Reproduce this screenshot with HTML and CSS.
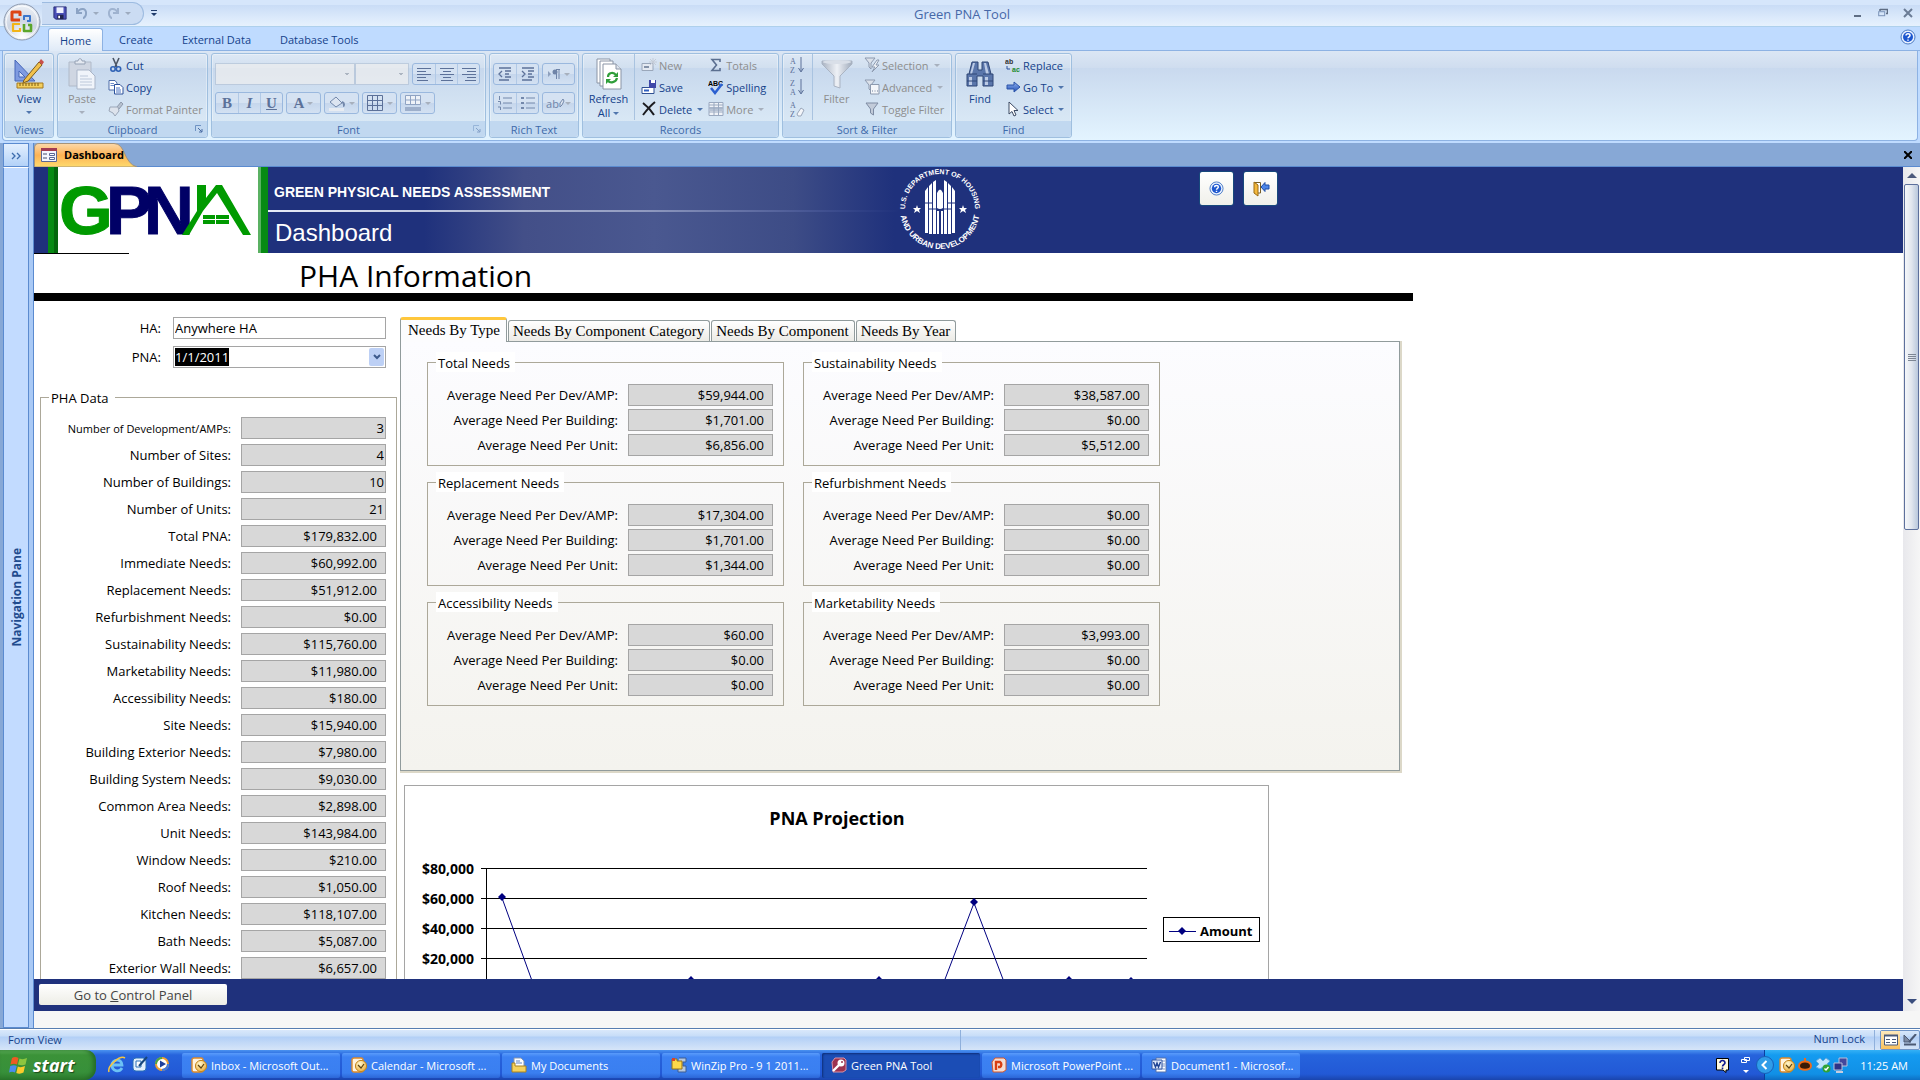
FILE: index.html
```html
<!DOCTYPE html>
<html lang="en">
<head>
    <meta charset="UTF-8">
    <meta name="viewport" content="width=device-width, initial-scale=1.0">
    <title>Green PNA Tool</title>
    <link rel="stylesheet" href="styles.css">
</head>
<body>
    <!-- Shared icons -->
    <svg class="defs" aria-hidden="true">
        <defs>
            <linearGradient id="gBlue" x1="0" y1="0" x2="0" y2="1"><stop offset="0" stop-color="#8fb2f0"/><stop offset="1" stop-color="#2350b5"/></linearGradient>
            <linearGradient id="gGrey" x1="0" y1="0" x2="1" y2="0"><stop offset="0" stop-color="#a9b3c2"/><stop offset=".5" stop-color="#eef1f6"/><stop offset="1" stop-color="#a0abbb"/></linearGradient>
            <radialGradient id="gOrb" cx=".5" cy=".9" r=".9"><stop offset="0" stop-color="#ffffff"/><stop offset=".5" stop-color="#cdd5e2"/><stop offset="1" stop-color="#eef2f8"/></radialGradient>
            <radialGradient id="gGold" cx=".4" cy=".3" r=".8"><stop offset="0" stop-color="#fff7d0"/><stop offset="1" stop-color="#e9a72c"/></radialGradient>
            <symbol id="help" viewBox="0 0 16 16">
                <circle cx="8" cy="8" r="7" fill="#e8f1ff" stroke="#4d7cc4"/>
                <circle cx="8" cy="8" r="5" fill="#1d57cf"/>
                <path d="M6 6.6C6 4.2 10 4.3 10 6.5C10 7.9 8 7.8 8 9.3M8 10.4V11.8" fill="none" stroke="#fff" stroke-width="1.5"/>
            </symbol>
            <symbol id="disk" viewBox="0 0 16 16">
                <path d="M1 1H15V15H3L1 13Z" fill="#4a4fb8" stroke="#23276e"/>
                <path d="M4 1.5H12V8H4Z" fill="#eef0ff"/>
                <path d="M5 10H12V15H5Z" fill="#20244f"/><path d="M6 11H8V14H6Z" fill="#fff"/>
            </symbol>
            <symbol id="funnel" viewBox="0 0 32 32">
                <path d="M1 3H31V6L19 18V30L13 28V18L1 6Z" fill="url(#gGrey)" stroke="#aab4c3"/>
                <ellipse cx="16" cy="4" rx="14" ry="2" fill="#d9dfe8"/>
            </symbol>
            <symbol id="outlook" viewBox="0 0 16 16">
                <rect x="1" y="1" width="11" height="14" rx="2" fill="#fff3df" stroke="#dd8a2b" stroke-width="1.4"/>
                <circle cx="10" cy="9" r="5.6" fill="url(#gGold)" stroke="#c4851d"/>
                <path d="M7 8L10 11L13 7" fill="none" stroke="#5d4310" stroke-width="1.2"/>
            </symbol>
            <symbol id="launcher" viewBox="0 0 8 8">
                <path d="M.5 6V.5H6" fill="none" stroke="#6f93c4"/><path d="M3 3L7 7M7 4V7H4" fill="none" stroke="#4a6da3"/>
            </symbol>
        </defs>
    </svg>

    <header class="titlebar">
        <div class="quick-access">
            <button type="button" aria-label="Save"><svg width="14" height="14"><use href="#disk"/></svg></button>
            <button type="button" class="off" aria-label="Undo"><svg width="24" height="14" viewBox="0 0 24 14"><path d="M2 2V7H7M2 7C5 1 12 2 11 8C11 10 9 12 8 12" fill="none" stroke="#8ca3c4" stroke-width="2"/><path d="M18 6H24L21 9Z" fill="#9dabbf"/></svg></button>
            <button type="button" class="off" aria-label="Redo"><svg width="24" height="14" viewBox="0 0 24 14"><path d="M11 2V7H6M11 7C8 1 1 2 2 8C2 10 4 12 5 12" fill="none" stroke="#9fb3d0" stroke-width="2"/><path d="M18 6H24L21 9Z" fill="#9dabbf"/></svg></button>
        </div>
        <button type="button" class="customize" aria-label="Customize toolbar"><svg width="6" height="7" viewBox="0 0 6 7"><path d="M0 0H6V1H0ZM0 3H6L3 6Z" fill="#1f3b6b"/></svg></button>
        <span class="app-title">Green PNA Tool</span>
        <div class="window-buttons">
            <button type="button" aria-label="Minimize"><svg width="10" height="10" viewBox="0 0 10 10"><path d="M1 8H8" stroke="#5e6d84" stroke-width="2"/></svg></button>
            <button type="button" aria-label="Restore"><svg width="10" height="10" viewBox="0 0 10 10"><path d="M2 1.5H9.5V5.5H8M2 1V3" fill="none" stroke="#5e6d84" stroke-width="1.5"/><rect x=".7" y="3.7" width="6" height="4" fill="none" stroke="#7b93b8"/></svg></button>
            <button type="button" aria-label="Close"><svg width="10" height="10" viewBox="0 0 10 10"><path d="M1 1L9 9M9 1L1 9" stroke="#6b7c96" stroke-width="2"/></svg></button>
        </div>
    </header>
    <button type="button" class="orb" aria-label="Office Button">
        <svg width="38" height="38" viewBox="0 0 38 38">
            <circle cx="19" cy="19" r="18" fill="url(#gOrb)" stroke="#8b98ad"/>
            <circle cx="19" cy="19" r="16" fill="none" stroke="#fff" opacity=".8"/>
            <g fill="none" stroke-width="3" stroke-linejoin="round">
                <path d="M17 17H9V9H17V13" stroke="#dd4413"/>
                <path d="M21 17V13H27V18H24" stroke="#3a76cc" stroke-width="2"/>
                <path d="M17 21H10V28H17V25" stroke="#f2b418" stroke-width="2.2"/>
                <path d="M21 21V28H28V22H25" stroke="#5ba62a" stroke-width="2.6"/>
            </g>
        </svg>
    </button>

    <nav class="ribbon-tabs">
        <a href="#home" class="current">Home</a>
        <a href="#create">Create</a>
        <a href="#external">External Data</a>
        <a href="#tools">Database Tools</a>
        <button type="button" class="help" aria-label="Help"><svg width="16" height="16"><use href="#help"/></svg></button>
    </nav>

    <div class="ribbon">
        <section class="group g-views">
            <div class="tools">
                <button type="button" class="big">
                    <svg width="30" height="32" viewBox="0 0 30 32">
                        <path d="M1 2L21 23H1Z" fill="#7f9be0" stroke="#4766b8"/><path d="M5 13L11 19H5Z" fill="#d5e0f8" stroke="#4766b8"/>
                        <path d="M10 22L25 4L28 7L14 23L9 25Z" fill="#f2c14c" stroke="#7a5c1c"/><path d="M25 4L27 1L30 4L28 7Z" fill="#c9504a"/>
                        <path d="M3 25H29V30H3Z" fill="#f3cf5d" stroke="#a6791c"/><path d="M6 25V28M9 25V28M12 25V28M15 25V28M18 25V28M21 25V28M24 25V28" stroke="#7b5a12"/>
                    </svg>
                    View<i class="caret"></i>
                </button>
            </div>
            <h2>Views</h2>
        </section>
        <section class="group g-clip">
            <div class="tools">
                <button type="button" class="big off">
                    <svg width="28" height="32" viewBox="0 0 28 32">
                        <path d="M1 4H23V28H1Z" fill="#cfd6e2" stroke="#b0bac9"/><path d="M7 6V3H10C10 0 14 0 14 3H17V6Z" fill="#e4e9f1" stroke="#95a1b4"/>
                        <path d="M9 12H21L27 18V31H9Z" fill="#f0f4fa" stroke="#a9b5c8"/><path d="M12 18H20M12 21H24M12 24H24M12 27H24" stroke="#bcc8da"/>
                    </svg>
                    Paste<i class="caret"></i>
                </button>
                <div class="stack">
                    <button type="button"><svg width="16" height="16" viewBox="0 0 16 16"><path d="M5 1L9 10M11 1L7 10" stroke="#4b5564" stroke-width="1.6"/><circle cx="5" cy="12" r="2.2" fill="none" stroke="#2f62b5" stroke-width="1.6"/><circle cx="10.5" cy="12" r="2.2" fill="none" stroke="#2f62b5" stroke-width="1.6"/></svg>Cut</button>
                    <button type="button"><svg width="16" height="16" viewBox="0 0 16 16"><path d="M1 1.5H7L9 4V11H1Z" fill="#fff" stroke="#4a6ba8"/><path d="M2.5 4.5H6M2.5 6.5H6" stroke="#6c8cc8"/><path d="M6.5 5.5H12L15 8.5V15H6.5Z" fill="#fff" stroke="#2c519b"/><path d="M8 9H12M8 11H13M8 13H13" stroke="#4a74c4"/></svg>Copy</button>
                    <button type="button" class="off"><svg width="16" height="16" viewBox="0 0 16 16"><path d="M9 6L13 1L15 3L11 8Z" fill="#b7c1cf" stroke="#8e9aad"/><path d="M2 6L10 6L11 10L7 15L5 12L1 10Z" fill="#dde3ec" stroke="#9ba7b8"/></svg>Format Painter</button>
                </div>
            </div>
            <h2>Clipboard<svg class="corner" width="8" height="8"><use href="#launcher"/></svg></h2>
        </section>
        <section class="group g-font">
            <div class="tools rows">
                <div class="line">
                    <div class="combos">
                        <select class="font-name" aria-label="Font" disabled></select>
                        <select class="font-size" aria-label="Font size" disabled></select>
                    </div>
                    <div class="cluster">
                        <button type="button" aria-label="Align left"><svg width="16" height="14" viewBox="0 0 16 14"><path d="M1 1.5H15M1 4.5H10M1 7.5H15M1 10.5H10M1 13.5H12" stroke="#5c7199"/></svg></button>
                        <button type="button" aria-label="Center"><svg width="16" height="14" viewBox="0 0 16 14"><path d="M1 1.5H15M4 4.5H12M1 7.5H15M4 10.5H12M2 13.5H14" stroke="#5c7199"/></svg></button>
                        <button type="button" aria-label="Align right"><svg width="16" height="14" viewBox="0 0 16 14"><path d="M1 1.5H15M6 4.5H15M1 7.5H15M6 10.5H15M4 13.5H15" stroke="#5c7199"/></svg></button>
                    </div>
                </div>
                <div class="line">
                    <div class="cluster">
                        <button type="button" class="glyph"><b>B</b></button>
                        <button type="button" class="glyph"><b><i>I</i></b></button>
                        <button type="button" class="glyph"><b><u>U</u></b></button>
                    </div>
                    <div class="cluster"><button type="button" class="glyph wide"><b>A</b><i class="caret"></i></button></div>
                    <div class="cluster"><button type="button" class="wide" aria-label="Fill color"><svg width="18" height="16" viewBox="0 0 18 16"><path d="M2 7L8 2L14 8L8 12Z" fill="#dde5f1" stroke="#7388ab"/><path d="M14 7C17 8 16 11 15 11" fill="none" stroke="#7388ab" stroke-width="2"/><path d="M1 13H16V16H1Z" fill="#e8ecf2"/></svg><i class="caret"></i></button></div>
                    <div class="cluster"><button type="button" class="wide" aria-label="Gridlines"><svg width="18" height="18" viewBox="0 0 18 18"><path d="M1.5 1.5H16.5V16.5H1.5ZM1.5 6.5H16.5M1.5 11.5H16.5M6.5 1.5V16.5M11.5 1.5V16.5" fill="none" stroke="#5c7199"/></svg><i class="caret"></i></button></div>
                    <div class="cluster"><button type="button" class="wide" aria-label="Alternate fill"><svg width="18" height="18" viewBox="0 0 18 18"><path d="M1.5 1.5H16.5V10.5H1.5ZM1.5 6H16.5M6.5 1.5V10M11.5 1.5V10" fill="#eef2f8" stroke="#8fa3c3"/><path d="M1 13H17V17H1Z" fill="#9dafcb"/></svg><i class="caret"></i></button></div>
                </div>
            </div>
            <h2>Font<svg class="corner off" width="8" height="8"><use href="#launcher"/></svg></h2>
        </section>
        <section class="group g-rich">
            <div class="tools rows">
                <div class="line">
                    <div class="cluster">
                        <button type="button" aria-label="Decrease indent"><svg width="16" height="16" viewBox="0 0 16 16"><path d="M2 2H14M8 5H14M8 8H12M8 11H14M2 14H12M5 5L2 8L5 11" fill="none" stroke="#5c7199" stroke-width="1.3"/></svg></button>
                        <button type="button" aria-label="Increase indent"><svg width="16" height="16" viewBox="0 0 16 16"><path d="M2 2H14M8 5H14M8 8H12M8 11H14M2 14H12M2 5L5 8L2 11" fill="none" stroke="#5c7199" stroke-width="1.3"/></svg></button>
                    </div>
                    <div class="cluster"><button type="button" class="wide" aria-label="Text direction"><svg width="14" height="12" viewBox="0 0 14 12"><path d="M1 3L4 6L1 9Z" fill="#8ea0bd"/><path d="M9 1.5H13M9.5 1V11M12 1V11" stroke="#6f84a8"/><circle cx="8" cy="4" r="2.5" fill="#6f84a8"/></svg><i class="caret"></i></button></div>
                </div>
                <div class="line">
                    <div class="cluster">
                        <button type="button" aria-label="Numbering"><svg width="16" height="16" viewBox="0 0 16 16"><path d="M6 3H15M6 8H15M6 13H15M2.5 1V5M1 6.5H3.5V9.5M1 12H3.5V15" fill="none" stroke="#7388ab"/></svg></button>
                        <button type="button" aria-label="Bullets"><svg width="16" height="16" viewBox="0 0 16 16"><path d="M6 3H15M6 8H15M6 13H15" stroke="#7388ab"/><path d="M1 2H4V4H1ZM1 7H4V9H1ZM1 12H4V14H1Z" fill="#7388ab"/></svg></button>
                    </div>
                    <div class="cluster"><button type="button" class="marker wide">ab<svg width="6" height="10" viewBox="0 0 6 10"><path d="M1 9L1 5L4 1L5 3L3 7Z" fill="#dfe6f1" stroke="#7388ab"/></svg><i class="caret"></i></button></div>
                </div>
            </div>
            <h2>Rich Text</h2>
        </section>
        <section class="group g-records">
            <div class="tools">
                <button type="button" class="big">
                    <svg width="26" height="32" viewBox="0 0 26 32">
                        <path d="M1 1H14V25H1Z" fill="#fff" stroke="#8a94a5"/><path d="M4 3H17V28H4Z" fill="#fff" stroke="#8a94a5"/>
                        <path d="M7 6H20L25 11V31H7Z" fill="#fff" stroke="#8a94a5"/><path d="M20 6V11H25" fill="#dfe5ee" stroke="#8a94a5"/>
                        <path d="M12 19C12 14 18 14 20 17M21 20C20 25 14 25 12 23" fill="none" stroke="#2f9e3a" stroke-width="2.2"/><path d="M22 14V19H17ZM10 26V21H15Z" fill="#2f9e3a"/>
                    </svg>
                    <span>Refresh<br>All<i class="caret inline"></i></span>
                </button>
                <div class="stack ruled">
                    <button type="button" class="off"><svg width="16" height="16" viewBox="0 0 16 16"><path d="M1 6.5H12V13.5H1Z" fill="#e4e9f1" stroke="#9aa7ba"/><path d="M3 10H8" stroke="#8492a8" stroke-width="2"/><path d="M12 1V9M8 5H16M9 2L15 8M15 2L9 8" stroke="#c5ccd7"/></svg>New</button>
                    <button type="button"><svg width="16" height="16" viewBox="0 0 16 16"><path d="M1 8.5H13V14.5H1Z" fill="#fff" stroke="#2e4f92"/><path d="M3 11.5H8" stroke="#2f5fc0" stroke-width="2"/><path d="M8 1H15V9H8Z" fill="#4048a8"/><path d="M10 1H14V4H10Z" fill="#fff"/></svg>Save</button>
                    <button type="button"><svg width="16" height="16" viewBox="0 0 16 16"><path d="M2 2C6 5 10 9 13 14M14 1C9 5 5 10 2 14" fill="none" stroke="#1b1b1f" stroke-width="2"/></svg>Delete<i class="caret"></i></button>
                </div>
                <div class="stack second">
                    <button type="button" class="off"><svg width="16" height="16" viewBox="0 0 16 16"><path d="M12 5V2.5H4L8.5 8L4 13.5H12V11" fill="none" stroke="#5b6f90" stroke-width="1.6"/></svg>Totals</button>
                    <button type="button"><svg width="16" height="16" viewBox="0 0 16 16"><text x="0" y="7" class="abc">ABC</text><path d="M3 9L7 14L14 5" fill="none" stroke="#2b5fd0" stroke-width="2.5"/></svg>Spelling</button>
                    <button type="button" class="off"><svg width="16" height="16" viewBox="0 0 16 16"><path d="M1 1.5H15V14.5H1Z" fill="#f0f3f8" stroke="#9aa9c0"/><path d="M1 6H15V10H1Z" fill="#b6c2d4"/><path d="M1 4H15M1 7H15M1 11H15M6 1V15M10.5 1V15" stroke="#9aa9c0"/></svg>More<i class="caret"></i></button>
                </div>
            </div>
            <h2>Records</h2>
        </section>
        <section class="group g-sort">
            <div class="tools">
                <div class="stack icons">
                    <button type="button" aria-label="Ascending"><svg width="16" height="20" viewBox="0 0 16 20"><text x="1" y="9" class="az">A</text><text x="1" y="18" class="az">Z</text><path d="M12 2V16M9.5 13L12 17L14.5 13" fill="none" stroke="#5c7199"/></svg></button>
                    <button type="button" aria-label="Descending"><svg width="16" height="20" viewBox="0 0 16 20"><text x="1" y="9" class="az">Z</text><text x="1" y="18" class="az">A</text><path d="M12 2V16M9.5 13L12 17L14.5 13" fill="none" stroke="#5c7199"/></svg></button>
                    <button type="button" aria-label="Clear sorts"><svg width="16" height="20" viewBox="0 0 16 20"><text x="1" y="9" class="az">A</text><text x="1" y="18" class="az">Z</text><path d="M8 15L12 9L15 11L12 17H9Z" fill="#f3f5f9" stroke="#9aa7ba"/></svg></button>
                </div>
                <button type="button" class="big off ruled">
                    <svg width="32" height="32"><use href="#funnel"/></svg>
                    Filter
                </button>
                <div class="stack">
                    <button type="button" class="off"><svg width="16" height="16" viewBox="0 0 16 16"><path d="M1 1H11L7 6V12L5 10V6Z" fill="#dbe1ea" stroke="#8d9aaf"/><path d="M13 3L8 10H11L8 15L15 8H12L15 3Z" fill="#eef1f6" stroke="#8d9aaf"/></svg>Selection<i class="caret"></i></button>
                    <button type="button" class="off"><svg width="16" height="16" viewBox="0 0 16 16"><path d="M1 1H11L7 6V12L5 10V6Z" fill="#dbe1ea" stroke="#8d9aaf"/><path d="M6.5 5.5H15V15H6.5Z" fill="#f4f6fa" stroke="#8d9aaf"/><path d="M8 12H9M10.5 12H11.5M13 12H14" stroke="#6f7f98"/></svg>Advanced<i class="caret"></i></button>
                    <button type="button" class="off"><svg width="16" height="16" viewBox="0 0 16 16"><path d="M2 2H14L9.5 8V14L6.5 12V8Z" fill="#c2cbd9" stroke="#7e8ca3"/></svg>Toggle Filter</button>
                </div>
            </div>
            <h2>Sort &amp; Filter</h2>
        </section>
        <section class="group g-find">
            <div class="tools">
                <button type="button" class="big">
                    <svg width="28" height="32" viewBox="0 0 28 32">
                        <path d="M6 4H12V12H16V4H22L25 16H27V28H17V18H11V28H1V16H3Z" fill="#5a76ab" stroke="#2f4676"/>
                        <path d="M7 5H9L6 16H4ZM18 5H20L23 16H20ZM3 19H6V27H3ZM19 19H22V27H19Z" fill="#bccbe6"/><path d="M1 23H11M17 23H27M3 16H11M17 16H25" stroke="#2f4676"/>
                    </svg>
                    Find
                </button>
                <div class="stack">
                    <button type="button"><svg width="16" height="18" viewBox="0 0 16 18"><text x="0" y="8" class="ab">ab</text><text x="7" y="16" class="ac">ac</text><path d="M2 10V13H5" fill="none" stroke="#2c519b"/></svg>Replace</button>
                    <button type="button"><svg width="16" height="16" viewBox="0 0 16 16"><path d="M2 6H9V3L15 8L9 13V10H2Z" fill="url(#gBlue)" stroke="#2a52a8"/></svg>Go To<i class="caret"></i></button>
                    <button type="button"><svg width="16" height="16" viewBox="0 0 16 16"><path d="M4 1V13L7 10.5L9 15L11 14L9 9.5H13Z" fill="#fff" stroke="#3c4a63"/></svg>Select<i class="caret"></i></button>
                </div>
            </div>
            <h2>Find</h2>
        </section>
    </div>

    <div class="workspace">
        <aside class="nav-pane">
            <button type="button" class="expand" aria-label="Open navigation pane"><svg width="10" height="8" viewBox="0 0 10 8"><path d="M1 1L4 4L1 7M6 1L9 4L6 7" fill="none" stroke="#3d6cad" stroke-width="1.3"/></svg></button>
            <div class="nav-title"><span>Navigation Pane</span></div>
        </aside>
        <div class="document">
            <div class="doc-tabs">
                <svg class="doc-shape" width="104" height="24" viewBox="0 0 104 24">
                    <defs><linearGradient id="gTab" x1="0" y1="0" x2="0" y2="1"><stop offset="0" stop-color="#fbd9ab"/><stop offset=".5" stop-color="#fdb254"/><stop offset="1" stop-color="#fedb6e"/></linearGradient></defs>
                    <path d="M.5 24V5Q.5 .5 5 .5H80C92 .5 89 20 103 24Z" fill="url(#gTab)" stroke="#a5937a"/>
                </svg>
                <a href="#dashboard" class="doc-tab">
                    <svg width="16" height="14" viewBox="0 0 16 14"><path d="M.5 .5H15.5V13.5H.5Z" fill="#f4f6ff" stroke="#5a6795"/><path d="M0 0H16V3H0Z" fill="#a33b52"/><path d="M2 6H6M2 10H6" stroke="#444c6e"/><path d="M8.5 5.5H13.5V7.5H8.5ZM8.5 9.5H13.5V11.5H8.5Z" fill="#fff" stroke="#5a6795"/></svg>
                    Dashboard
                </a>
                <button type="button" class="doc-close" aria-label="Close form"><svg width="8" height="8" viewBox="0 0 8 8"><path d="M0 0L8 8M8 0L0 8" stroke="#000" stroke-width="2"/></svg></button>
            </div>
            <div class="form-area">
                <main class="form">
                    <div class="banner">
                        <svg class="logo" width="220" height="86" viewBox="0 0 220 86" role="img" aria-label="GPNA">
                            <path d="M0 0H220V86H0Z" fill="#fff"/>
                            <path d="M0 0H10V86H0ZM210 0H220V86H210Z" fill="#078a14"/><path d="M6 0H10V86H6Z" fill="#04660d"/><path d="M210 0H213V86H210Z" fill="#5bb163"/>
                            <text y="67" class="logo-text"><tspan x="11" class="logo-g">G</tspan><tspan x="58">P</tspan><tspan x="96">N</tspan></text>
                            <path d="M134 68L149 44V18H158V31L168 18H174L203 68H195L169 26L155 44L141 68Z" fill="#009a00"/>
                            <path d="M155 48H167V52H155ZM168 48H181V52H168ZM155 53H167V57H155ZM168 53H181V57H168Z" fill="#009a00"/>
                        </svg>
                        <div class="banner-text">
                            <p>GREEN PHYSICAL NEEDS ASSESSMENT</p>
                            <p class="page-name">Dashboard</p>
                        </div>
                        <svg class="seal" width="84" height="86" viewBox="0 0 84 86" role="img" aria-label="U.S. Department of Housing and Urban Development">
                            <defs>
                                <path id="ringTop" d="M7 42A35 35 0 0 1 77 42"/>
                                <path id="ringBottom" d="M2 42A40 40 0 0 0 82 42"/>
                            </defs>
                            <text class="ring"><textPath href="#ringTop" startOffset="50%">U.S. DEPARTMENT OF HOUSING</textPath></text>
                            <text class="ring lower"><textPath href="#ringBottom" startOffset="50%">AND URBAN DEVELOPMENT</textPath></text>
                            <path d="M27 24L30 20V66H27ZM31 19L34 16V67H31ZM35 15L38 13V67H35ZM46 13L49 15V67H46ZM50 16L53 19V67H50ZM54 20L57 24V66H54ZM39 44H41V67H39ZM43 44H45V67H43Z" fill="#fff"/>
                            <path d="M39 41V26Q42 19 45 26V41Q42 43 39 41Z" fill="#fff"/>
                            <path d="M27 36H34M50 36H57M31 42H38M46 42H53" stroke="#1f317c"/>
                            <path d="M19 38L20 41H23L21 43L22 46L19 44L16 46L17 43L15 41H18ZM65 38L66 41H69L67 43L68 46L65 44L62 46L63 43L61 41H64Z" fill="#fff"/>
                        </svg>
                        <div class="banner-buttons">
                            <button type="button" aria-label="Help"><svg width="15" height="15"><use href="#help"/></svg></button>
                            <button type="button" aria-label="Exit"><svg width="18" height="16" viewBox="0 0 18 16"><path d="M3 1.5H8.5V12H3Z" fill="#fff" stroke="#77602a"/><path d="M2 1L6 4V15L2 12Z" fill="#f3b83c" stroke="#9a6a12"/><path d="M17 4V8H13V10.5L9 6L13 1.5V4Z" fill="#4d86e8" stroke="#1f4ea8"/></svg></button>
                        </div>
                    </div>
                    <h1>PHA Information</h1>
                    <div class="rule"></div>

                    <div class="form-body">
                        <div class="left-column">
                            <label class="pick"><span>HA:</span><input type="text" value="Anywhere HA"></label>
                            <label class="pick" for="pna"><span>PNA:</span>
                                <span class="combo"><select id="pna"><option>1/1/2011</option></select><mark aria-hidden="true">1/1/2011</mark><i class="drop"><svg width="8" height="6" viewBox="0 0 8 6"><path d="M1 1L4 4L7 1" fill="none" stroke="#3d5a8c" stroke-width="2"/></svg></i></span>
                            </label>
                            <fieldset class="pha-data">
                                <legend>PHA Data</legend>
                                <label class="field small"><span>Number of Development/AMPs:</span><input type="text" class="count" value="3" readonly></label>
                                <label class="field"><span>Number of Sites:</span><input type="text" class="count" value="4" readonly></label>
                                <label class="field"><span>Number of Buildings:</span><input type="text" class="count" value="10" readonly></label>
                                <label class="field"><span>Number of Units:</span><input type="text" class="count" value="21" readonly></label>
                                <label class="field"><span>Total PNA:</span><input type="text" value="$179,832.00" readonly></label>
                                <label class="field"><span>Immediate Needs:</span><input type="text" value="$60,992.00" readonly></label>
                                <label class="field"><span>Replacement Needs:</span><input type="text" value="$51,912.00" readonly></label>
                                <label class="field"><span>Refurbishment Needs:</span><input type="text" value="$0.00" readonly></label>
                                <label class="field"><span>Sustainability Needs:</span><input type="text" value="$115,760.00" readonly></label>
                                <label class="field"><span>Marketability Needs:</span><input type="text" value="$11,980.00" readonly></label>
                                <label class="field"><span>Accessibility Needs:</span><input type="text" value="$180.00" readonly></label>
                                <label class="field"><span>Site Needs:</span><input type="text" value="$15,940.00" readonly></label>
                                <label class="field"><span>Building Exterior Needs:</span><input type="text" value="$7,980.00" readonly></label>
                                <label class="field"><span>Building System Needs:</span><input type="text" value="$9,030.00" readonly></label>
                                <label class="field"><span>Common Area Needs:</span><input type="text" value="$2,898.00" readonly></label>
                                <label class="field"><span>Unit Needs:</span><input type="text" value="$143,984.00" readonly></label>
                                <label class="field"><span>Window Needs:</span><input type="text" value="$210.00" readonly></label>
                                <label class="field"><span>Roof Needs:</span><input type="text" value="$1,050.00" readonly></label>
                                <label class="field"><span>Kitchen Needs:</span><input type="text" value="$118,107.00" readonly></label>
                                <label class="field"><span>Bath Needs:</span><input type="text" value="$5,087.00" readonly></label>
                                <label class="field"><span>Exterior Wall Needs:</span><input type="text" value="$6,657.00" readonly></label>
                            </fieldset>
                        </div>

                        <div class="right-column">
                            <div class="tabs" role="tablist">
                                <button type="button" role="tab" aria-selected="true" class="tab active">Needs By Type</button>
                                <button type="button" role="tab" class="tab">Needs By Component Category</button>
                                <button type="button" role="tab" class="tab">Needs By Component</button>
                                <button type="button" role="tab" class="tab">Needs By Year</button>
                            </div>
                            <div class="tab-panel" role="tabpanel">
                                <fieldset>
                                    <legend>Total Needs</legend>
                                    <label class="field"><span>Average Need Per Dev/AMP:</span><input type="text" value="$59,944.00" readonly></label>
                                    <label class="field"><span>Average Need Per Building:</span><input type="text" value="$1,701.00" readonly></label>
                                    <label class="field"><span>Average Need Per Unit:</span><input type="text" value="$6,856.00" readonly></label>
                                </fieldset>
                                <fieldset>
                                    <legend>Sustainability Needs</legend>
                                    <label class="field"><span>Average Need Per Dev/AMP:</span><input type="text" value="$38,587.00" readonly></label>
                                    <label class="field"><span>Average Need Per Building:</span><input type="text" value="$0.00" readonly></label>
                                    <label class="field"><span>Average Need Per Unit:</span><input type="text" value="$5,512.00" readonly></label>
                                </fieldset>
                                <fieldset>
                                    <legend>Replacement Needs</legend>
                                    <label class="field"><span>Average Need Per Dev/AMP:</span><input type="text" value="$17,304.00" readonly></label>
                                    <label class="field"><span>Average Need Per Building:</span><input type="text" value="$1,701.00" readonly></label>
                                    <label class="field"><span>Average Need Per Unit:</span><input type="text" value="$1,344.00" readonly></label>
                                </fieldset>
                                <fieldset>
                                    <legend>Refurbishment Needs</legend>
                                    <label class="field"><span>Average Need Per Dev/AMP:</span><input type="text" value="$0.00" readonly></label>
                                    <label class="field"><span>Average Need Per Building:</span><input type="text" value="$0.00" readonly></label>
                                    <label class="field"><span>Average Need Per Unit:</span><input type="text" value="$0.00" readonly></label>
                                </fieldset>
                                <fieldset>
                                    <legend>Accessibility Needs</legend>
                                    <label class="field"><span>Average Need Per Dev/AMP:</span><input type="text" value="$60.00" readonly></label>
                                    <label class="field"><span>Average Need Per Building:</span><input type="text" value="$0.00" readonly></label>
                                    <label class="field"><span>Average Need Per Unit:</span><input type="text" value="$0.00" readonly></label>
                                </fieldset>
                                <fieldset>
                                    <legend>Marketability Needs</legend>
                                    <label class="field"><span>Average Need Per Dev/AMP:</span><input type="text" value="$3,993.00" readonly></label>
                                    <label class="field"><span>Average Need Per Building:</span><input type="text" value="$0.00" readonly></label>
                                    <label class="field"><span>Average Need Per Unit:</span><input type="text" value="$0.00" readonly></label>
                                </fieldset>
                            </div>
                            <div class="chart">
                                <svg width="863" height="300" viewBox="0 0 863 300">
                                    <text x="432" y="39" class="chart-title">PNA Projection</text>
                                    <g class="axis-labels">
                                        <text x="69" y="88">$80,000</text>
                                        <text x="69" y="118">$60,000</text>
                                        <text x="69" y="148">$40,000</text>
                                        <text x="69" y="178">$20,000</text>
                                    </g>
                                    <path d="M76 82.5H742M76 112.5H742M76 142.5H742M76 172.5H742M81.5 82V210" stroke="#000" fill="none"/>
                                    <path d="M97 112L134 214L159 220M534 209L569 117L604 209" stroke="#000080" fill="none"/>
                                    <path d="M97 107L101 111L97 115L93 111ZM569 112L573 116L569 120L565 116ZM286 190L290 194L286 198L282 194ZM474 190L478 194L474 198L470 194ZM664 190L668 194L664 198L660 194ZM726 191L730 195L726 199L722 195Z" fill="#000080"/>
                                    <rect x="758.5" y="131.5" width="96" height="24" fill="#fff" stroke="#000"/>
                                    <path d="M764 145.5H791" stroke="#000080"/><path d="M777 141L781 145L777 149L773 145Z" fill="#000080"/>
                                    <text x="795" y="150" class="legend-text">Amount</text>
                                </svg>
                            </div>
                        </div>
                    </div>

                    <div class="form-footer">
                        <button type="button">Go to <u>C</u>ontrol Panel</button>
                    </div>
                </main>
                <div class="scrollbar">
                    <svg width="10" height="6" viewBox="0 0 10 6"><path d="M5 0L10 5H0Z" fill="#4d5b7d"/></svg>
                    <div class="track"><div class="thumb"><i></i><i></i><i></i><i></i></div></div>
                    <svg width="10" height="6" viewBox="0 0 10 6"><path d="M0 0H10L5 5Z" fill="#3a4d7d"/></svg>
                </div>
            </div>
            <div class="below-form"></div>
        </div>
    </div>

    <footer class="status">
        <span class="mode">Form View</span>
        <span class="locks">Num Lock</span>
        <div class="views">
            <button type="button" class="on" aria-label="Form View"><svg width="14" height="12" viewBox="0 0 14 12"><path d="M.5 1.5H13.5V11H.5Z" fill="#fff" stroke="#49597a"/><path d="M0 1.5H14" stroke="#49597a" stroke-width="2"/><path d="M2 5.5H6M2 8.5H6M8 5.5H12M8 8.5H12" stroke="#49597a"/></svg></button>
            <button type="button" aria-label="Design View"><svg width="14" height="12" viewBox="0 0 14 12"><path d="M1 1L8 8H1Z" fill="#7c8aa3" stroke="#4c5a75"/><path d="M6 8L13 0" stroke="#4c5a75" stroke-width="2"/><path d="M1 10.5H13" stroke="#4c5a75" stroke-width="2"/></svg></button>
        </div>
    </footer>

    <footer class="taskbar">
        <button type="button" class="start">
            <svg width="20" height="20" viewBox="0 0 20 20"><path d="M3 3Q6 1 9.5 3L8 9.5Q5 8 1.5 9.5Z" fill="#ee5a24"/><path d="M10.5 3.5Q14 5 18 3L16.5 9.5Q13 11 9 9.5Z" fill="#8cc63f"/><path d="M1.2 11Q5 9.5 7.8 11L6 17.5Q3 16 0 17.5Z" fill="#4a8cf0"/><path d="M8.8 11.5Q12 13 16 11L14.5 17.5Q11 19.5 7.3 18Z" fill="#fccb2b"/></svg>
            start
        </button>
        <div class="quick-launch">
            <button type="button" aria-label="Internet Explorer"><svg width="18" height="18" viewBox="0 0 18 18"><path d="M14 12C11 17 4 15 4 9C4 3 14 2 14 9H5" fill="none" stroke="#6cc2f5" stroke-width="2.8"/><path d="M1 16C-1 10 12 -1 17 2" fill="none" stroke="#f5c541" stroke-width="1.5"/></svg></button>
            <button type="button" aria-label="Show Desktop"><svg width="16" height="16" viewBox="0 0 16 16"><rect x="1" y="2" width="13" height="13" rx="3" fill="#e3f0fc" stroke="#2b71b8"/><path d="M4 5H9V11H4Z" fill="#fff" stroke="#2b71b8"/><path d="M7 10L15 1" stroke="#17467c" stroke-width="2"/></svg></button>
            <button type="button" aria-label="Media Player"><svg width="16" height="16" viewBox="0 0 16 16"><circle cx="8" cy="8" r="6" fill="#fff" stroke="#f0a030" stroke-width="2"/><path d="M8 2A6 6 0 0 0 2 8" fill="none" stroke="#4aa54a" stroke-width="2"/><path d="M14 8A6 6 0 0 1 8 14" fill="none" stroke="#3d77e0" stroke-width="2"/><path d="M6 4.5L12 8L6 11.5Z" fill="#1d3f9c"/></svg></button>
        </div>
        <div class="tasks">
            <button type="button"><svg width="16" height="16"><use href="#outlook"/></svg>Inbox - Microsoft Out...</button>
            <button type="button"><svg width="16" height="16"><use href="#outlook"/></svg>Calendar - Microsoft ...</button>
            <button type="button"><svg width="16" height="16" viewBox="0 0 16 16"><path d="M3 1H10L13 4V12H3Z" fill="#fff" stroke="#8796ad"/><path d="M5 4H9M5 6H11" stroke="#5d82c4"/><path d="M1 6H4V9H15V15H1Z" fill="#f5d25e" stroke="#a8821e"/></svg>My Documents</button>
            <button type="button"><svg width="16" height="16" viewBox="0 0 16 16"><path d="M8 1H15V5H12V9H15V15H7V11" fill="#b6c7dd" stroke="#3c5d93"/><path d="M1 2H6V4H11V12H1Z" fill="#ffd94a" stroke="#96731a"/><path d="M1 1H4V4H1Z" fill="#d8432b"/></svg>WinZip Pro - 9 1 2011...</button>
            <button type="button" class="pressed"><svg width="16" height="16" viewBox="0 0 16 16"><path d="M4 1H13L15 3V13L12 15H2L1 5Z" fill="#9c3350" stroke="#d993a6"/><circle cx="10" cy="6" r="3.5" fill="#fff"/><path d="M8 8L2 14" stroke="#fff" stroke-width="2.4"/><circle cx="11" cy="5" r="1" fill="#9c3350"/></svg>Green PNA Tool</button>
            <button type="button"><svg width="16" height="16" viewBox="0 0 16 16"><path d="M4 1H13L15 3V13L12 15H2L1 5Z" fill="#f4ded4" stroke="#d4562a"/><path d="M5 13V5H9A3 3 0 0 1 9 10H7" fill="none" stroke="#d93f12" stroke-width="2.4"/></svg>Microsoft PowerPoint ...</button>
            <button type="button"><svg width="16" height="16" viewBox="0 0 16 16"><path d="M5 1H15V15H5Z" fill="#fff" stroke="#5573ad"/><path d="M8 4H14M11 7H14M11 9H14M7 12H14" stroke="#7d98cb"/><path d="M1 3H11V12H1Z" fill="#dfe9fb" stroke="#34579f"/><path d="M2.5 5L4.5 10L6 6L7.5 10L9.5 5" fill="none" stroke="#204494" stroke-width="1.4"/></svg>Document1 - Microsof...</button>
        </div>
        <div class="lang">
            <svg width="13" height="15" viewBox="0 0 13 15"><path d="M.5 .5H12.5V12H10V14.5L7 12H.5Z" fill="#fffbe0" stroke="#000"/><path d="M4 5C4 1.5 9 2 9 5C9 6.5 6.5 6.5 6.5 8.5M6.5 9.5V11" fill="none" stroke="#111a90" stroke-width="1.6"/></svg>
            <svg width="9" height="18" viewBox="0 0 9 18"><path d="M3.5 1.5H8.5V4.5H3.5ZM.5 3.5H5.5V6.5H.5Z" fill="#2159d4" stroke="#fff"/><path d="M2 14H8L5 17Z" fill="#fff"/></svg>
        </div>
        <div class="tray">
            <button type="button" class="chevron" aria-label="Show hidden icons"><svg width="18" height="18" viewBox="0 0 18 18"><circle cx="9" cy="9" r="8.5" fill="#2f9ce8" stroke="#1a5fb8"/><path d="M10.5 5L6.5 9L10.5 13" fill="none" stroke="#fff" stroke-width="2"/></svg></button>
            <svg width="16" height="16"><use href="#outlook"/></svg>
            <svg width="16" height="16" viewBox="0 0 16 16"><path d="M8 1V4M2 9C2 3 14 3 14 9C14 14 2 14 2 9Z" fill="#3a1a06" stroke="#ef6c1a" stroke-width="2"/></svg>
            <svg width="16" height="16" viewBox="0 0 16 16"><path d="M1 4L5 1L8 4L11 1L15 4L12 7L15 10L11 12L8 10L5 12L1 10L4 7Z" fill="#bfe2fb" stroke="#5fa8dd"/><circle cx="11.5" cy="11.5" r="4" fill="#2fa336"/><path d="M9.5 11.5L11 13L13.5 10" fill="none" stroke="#fff" stroke-width="1.4"/></svg>
            <svg width="16" height="16" viewBox="0 0 16 16"><path d="M6 1H14V9H6Z" fill="#44489c" stroke="#b9bfd9"/><path d="M1 6H9V13H1Z" fill="#2d3186" stroke="#b9bfd9"/><path d="M3 15H10" stroke="#c8cde0" stroke-width="2"/></svg>
            <time>11:25 AM</time>
        </div>
    </footer>
</body>
</html>
```
FILE: styles.css
```css
* {
    box-sizing: border-box;
}

body {
    margin: 0;
    height: 100vh;
    display: flex;
    flex-direction: column;
    overflow: hidden;
    position: relative;
    font-family: "Open Sans", "Noto Sans", sans-serif;
    font-size: 11px;
    color: #15428b;
    background: #bfdbff;
}

button,
input,
select {
    font: inherit;
    color: inherit;
}

button {
    padding: 0;
    border: 0;
    background: none;
    white-space: nowrap;
}

.defs {
    position: absolute;
    width: 0;
    height: 0;
}

svg {
    flex: none;
}

.caret {
    flex: none;
    border: 3px solid transparent;
    border-top-color: #5076ad;
    border-bottom: 0;
}

/* Title bar */
.titlebar {
    flex: none;
    height: 27px;
    display: flex;
    align-items: center;
    padding: 0 7px 0 42px;
    border-bottom: 1px solid #aed0ec;
    background: linear-gradient(#d6e6fb 5px, #c9dcf6 5px, #dceafb 18px, #e6f1fd);
}

.quick-access {
    display: flex;
    align-items: center;
    gap: 8px;
    width: 102px;
    height: 23px;
    padding-left: 11px;
    border: 1px solid #9dbbe0;
    border-left: 0;
    border-radius: 0 12px 12px 0;
    background: #cbdcf3;
}

.quick-access button,
.customize {
    display: flex;
}

.customize {
    margin-left: 7px;
}

.app-title {
    flex: 1;
    padding: 2px 86px 0 0;
    text-align: center;
    font-size: 13px;
    color: #4668a8;
}

.window-buttons {
    display: flex;
    gap: 15px;
}

.orb {
    position: absolute;
    left: 3px;
    top: 3px;
}

/* Ribbon tabs */
.ribbon-tabs {
    flex: none;
    height: 24px;
    display: flex;
    align-items: flex-end;
    padding: 0 4px 0 48px;
    border-bottom: 1px solid #8db2e3;
}

.ribbon-tabs a {
    height: 23px;
    line-height: 26px;
    padding: 0 15px 0 14px;
    color: #15428b;
    text-decoration: none;
}

.ribbon-tabs .current {
    padding: 0 11px;
    margin-right: 2px;
    margin-bottom: -1px;
    line-height: 24px;
    border: 1px solid #8db2e3;
    border-bottom: 0;
    border-radius: 3px 3px 0 0;
    background: linear-gradient(#ffffff, #dfeaf7);
}

.help {
    margin: 0 0 2px auto;
}

/* Ribbon */
.ribbon {
    flex: none;
    height: 90px;
    display: flex;
    gap: 3px;
    margin: 0 2px 2px;
    padding: 2px 1px 2px;
    border: 1px solid #8db2e3;
    border-top: 0;
    border-radius: 0 0 4px 4px;
    background: linear-gradient(#dbe6f4, #cfddef 17px, #c9d9ee 17px, #e3f4ff);
}

.group {
    display: flex;
    flex-direction: column;
    border: 1px solid #9fbfdf;
    border-radius: 3px;
    background: linear-gradient(#dde8f5, #d1dfef 14px, #c7d8ed 14px, #d9e8f5 68px);
    box-shadow: inset 0 0 0 1px rgba(255, 255, 255, 0.35);
}

.g-views { width: 50px; }
.g-clip { width: 151px; }
.g-font { width: 275px; }
.g-rich { width: 90px; }
.g-records { width: 197px; }
.g-sort { width: 170px; }
.g-find { width: 117px; }

.group h2 {
    flex: none;
    position: relative;
    margin: 0;
    height: 16px;
    line-height: 17px;
    font-size: 11px;
    font-weight: normal;
    text-align: center;
    color: #3e6aaa;
    background: #c1d8f0;
    border-radius: 0 0 3px 3px;
}

.corner {
    position: absolute;
    right: 4px;
    top: 4px;
}

.corner.off {
    opacity: 0.5;
}

.tools {
    flex: 1;
    min-height: 0;
    display: flex;
    padding: 0 2px;
}

.big {
    display: flex;
    flex-direction: column;
    align-items: center;
    gap: 2px;
    width: 44px;
    padding-top: 4px;
    line-height: 14px;
}

.big .caret {
    margin-top: 3px;
}

.big .caret.inline {
    display: inline-block;
    margin: 0 0 2px 3px;
}

.off {
    color: #8d8d8d;
}

.cluster .caret,
.off .caret {
    border-top-color: #a7b0bd;
}

.stack {
    display: flex;
    flex-direction: column;
    align-items: flex-start;
    margin-left: 4px;
}

.stack button {
    flex: none;
    display: flex;
    align-items: center;
    gap: 2px;
    height: 22px;
}

.stack .caret {
    margin-left: 3px;
}

.stack.ruled,
.big.ruled {
    border-left: 1px solid #a9c3e0;
}

.stack.ruled {
    height: 66px;
    padding-left: 6px;
    margin-left: 2px;
}

.stack.second {
    margin-left: 5px;
}

.stack.icons {
    margin: 0 7px 0 4px;
}

.big.ruled {
    width: 48px;
    height: 66px;
}

.g-records .big {
    width: 47px;
}

.g-find .stack {
    margin-left: 3px;
}

.rows {
    flex-direction: column;
    gap: 7px;
    padding: 9px 3px 0;
}

.line {
    display: flex;
    gap: 3px;
}

.combos {
    display: flex;
}

.cluster {
    display: flex;
    height: 22px;
    border: 1px solid #9ab8de;
    border-radius: 3px;
    background: linear-gradient(#d5e2f2 50%, #c5d6ec 50%, #d3e1f2);
}

.cluster button {
    display: flex;
    align-items: center;
    justify-content: center;
    gap: 3px;
    width: 22px;
}

.cluster .wide {
    width: 33px;
}

.cluster button + button {
    border-left: 1px solid #b1c9e6;
}

.g-rich .wide {
    width: 31px;
}

.glyph {
    font-family: "Liberation Serif", serif;
    font-size: 15px;
    color: #5c7199;
}

.marker {
    color: #6f84a8;
}

.cluster .marker {
    gap: 0;
}

.font-name,
.font-size {
    appearance: none;
    height: 22px;
    border: 1px solid #b4c3d6;
    border-radius: 0;
    background: conic-gradient(from 315deg at 50% 100%, #a0a6ae 90deg, transparent 0) right 4px center / 6px 3px no-repeat #efefef;
}

.font-name {
    width: 140px;
}

.font-size {
    width: 54px;
}

.abc {
    font: bold 7px "Liberation Sans", sans-serif;
}

.az {
    font: 8px "Liberation Serif", serif;
    fill: #5c7199;
}

.ab,
.ac {
    font: bold 7px "Liberation Sans", sans-serif;
    fill: #333;
}

.ac {
    fill: #1d8a2c;
}

/* Workspace */
.workspace {
    flex: 1;
    min-height: 0;
    display: flex;
    background: #87a8d6;
}

.nav-pane {
    width: 34px;
    display: flex;
    flex-direction: column;
    padding-left: 3px;
    border-right: 1px solid #5b8bd0;
    background: linear-gradient(to right, #87a8d6 3px, #a9c9f5 3px);
}

.nav-pane .expand {
    width: 26px;
    height: 24px;
    border: 1px solid #5b8bd0;
    background: linear-gradient(#e3effe, #b3d2f8);
}

.nav-title {
    flex: 1;
    width: 26px;
    display: flex;
    align-items: center;
    justify-content: center;
    border: 1px solid #5b8bd0;
    border-top-color: #fff;
    background: #c2dbff;
}

.nav-title span {
    writing-mode: vertical-rl;
    transform: rotate(180deg);
    font-size: 12px;
    font-weight: bold;
    color: #1f4b8e;
}

.document {
    flex: 1;
    min-width: 0;
    display: flex;
    flex-direction: column;
}

.doc-tabs {
    flex: none;
    position: relative;
    height: 24px;
    display: flex;
    justify-content: space-between;
    align-items: center;
    padding: 0 8px 0 7px;
    border-bottom: 1px solid #5b8bd0;
}

.doc-shape {
    position: absolute;
    left: 0;
    top: 0;
}

.doc-tab {
    position: relative;
    display: flex;
    align-items: center;
    gap: 7px;
    font-weight: bold;
    color: #000;
    text-decoration: none;
}

.form-area {
    flex: 1;
    min-height: 0;
    display: flex;
}

.form {
    flex: 1;
    min-width: 0;
    display: flex;
    flex-direction: column;
    background: #fff;
    color: #000;
    font-size: 13px;
}

.banner {
    flex: none;
    height: 86px;
    display: flex;
    padding-left: 14px;
    background: linear-gradient(to right, #1f317c 390px, #434f88 490px, #4a5890 620px, #3d4c86 760px, #1f317c 860px);
}

.banner-text {
    width: 630px;
    font-family: "Liberation Sans", Arial, sans-serif;
    color: #fff;
}

.banner-text p {
    margin: 0;
    height: 43px;
    padding: 17px 0 0 6px;
    font-size: 14px;
    font-weight: bold;
    line-height: 16px;
}

.banner-text .page-name {
    padding: 9px 0 0 7px;
    border-top: 2px solid;
    border-image: linear-gradient(to right, #e8ecf8, #8f99bf 60%, #1f317c) 1;
    font-size: 24px;
    font-weight: normal;
    line-height: 24px;
}

.logo-text {
    font: bold 69px "Liberation Sans", Arial, sans-serif;
    fill: #000066;
    stroke: #000066;
}

.logo-g {
    fill: #009a00;
    stroke: #009a00;
}

.ring {
    font: bold 7px "Liberation Sans", Arial, sans-serif;
    fill: #fff;
    text-anchor: middle;
}

.ring.lower {
    font-size: 8px;
}

.banner-buttons {
    display: flex;
    gap: 9px;
    padding: 4px 0 0 217px;
}

.banner-buttons button {
    display: flex;
    align-items: center;
    justify-content: center;
    width: 35px;
    height: 35px;
    border: 1px solid #17497c;
    border-radius: 3px;
    background: linear-gradient(#ffffff, #f0f0ea);
}

h1 {
    flex: none;
    margin: 0;
    height: 40px;
    padding-left: 265px;
    font-size: 30px;
    font-weight: normal;
    line-height: 46px;
    background: linear-gradient(#000, #000) 0 0 / 95px 1px no-repeat;
}

.rule {
    flex: none;
    max-width: 1379px;
    height: 8px;
    background: #000;
}

.form-body {
    flex: 1;
    min-height: 0;
    overflow: hidden;
    display: flex;
    align-items: flex-start;
    gap: 3px;
    padding: 16px 0 0 6px;
}

.left-column {
    flex: none;
    width: 357px;
}

.pick {
    display: grid;
    grid-template-columns: 121px 213px;
    gap: 12px;
    align-items: center;
    height: 22px;
    margin-bottom: 7px;
}

.pick > span:first-child {
    text-align: right;
}

.pick input,
.pick select {
    width: 100%;
    height: 22px;
    padding: 0 1px 1px;
    border: 1px solid #a5a5a5;
    border-radius: 0;
    background: #fff;
}

.pick select {
    appearance: none;
    display: block;
}

.combo {
    position: relative;
}

.combo mark {
    position: absolute;
    left: 2px;
    top: 2px;
    line-height: 18px;
    color: #fff;
    background: #000;
    pointer-events: none;
}

.combo .drop {
    position: absolute;
    right: 2px;
    top: 2px;
    display: flex;
    align-items: center;
    justify-content: center;
    width: 15px;
    height: 18px;
    border-radius: 2px;
    background: #bdd0f5;
    pointer-events: none;
}

fieldset {
    min-width: 0;
    margin: 0;
    padding: 12px 10px 9px;
    border: 1px solid #aca899;
}

legend {
    height: 20px;
    line-height: 23px;
    margin-left: -2px;
    padding: 0 5px 0 2px;
    background: #fff;
}

.pha-data {
    margin-top: 19px;
    padding-top: 10px;
}

.pha-data legend {
    padding: 0 6px 0 2px;
}

.field {
    display: flex;
    align-items: center;
    justify-content: flex-end;
    gap: 10px;
    height: 22px;
    margin-top: 3px;
}

legend + .field {
    margin-top: 0;
}

.pha-data .field + .field {
    margin-top: 5px;
}

.field.small span {
    font-size: 11px;
}

.field input {
    width: 145px;
    height: 22px;
    padding: 0 8px 0 0;
    border: 1px solid #a5a5a5;
    background: #d8d8d8;
    text-align: right;
}

.field .count {
    padding-right: 1px;
}

.right-column {
    flex: 1;
    max-width: 1000px;
}

.tabs {
    display: flex;
    align-items: flex-end;
    gap: 1px;
}

.tab {
    height: 21px;
    padding: 0 5px 0 4px;
    font-family: "Liberation Serif", serif;
    font-size: 15px;
    line-height: 20px;
    color: #000;
    border: 1px solid #919b9c;
    border-bottom: 0;
    border-radius: 3px 3px 0 0;
    background: linear-gradient(#ffffff, #ecebe6);
}

.tab.active {
    height: 25px;
    margin-bottom: -1px;
    padding: 0 6px 2px 7px;
    border-top: 3px solid #ffc73c;
    background: #fcfcfe;
}

.tab-panel {
    display: grid;
    grid-template-columns: 357px 357px;
    align-content: start;
    gap: 6px 19px;
    min-height: 430px;
    padding: 10px 0 0 26px;
    border: 1px solid #919b9c;
    box-shadow: 1px 1px 0 1px #dcd8c8;
    background: linear-gradient(#fcfcff, #f4f3ee);
}

.chart {
    width: 865px;
    margin: 14px 0 0 4px;
    border: 1px solid #a5a5a5;
}

.chart svg {
    display: block;
}

.chart-title,
.axis-labels,
.legend-text {
    font-size: 13px;
    font-weight: bold;
}

.chart-title {
    font-size: 18px;
    text-anchor: middle;
}

.axis-labels {
    font-size: 14px;
    text-anchor: end;
}

.form-footer {
    flex: none;
    height: 32px;
    padding: 5px;
    background: #1f317c;
}

.form-footer button {
    display: block;
    width: 188px;
    height: 21px;
    line-height: 20px;
    color: #444;
    border-radius: 2px;
    background: linear-gradient(#ffffff, #edede6);
}

.scrollbar {
    flex: none;
    width: 17px;
    display: flex;
    flex-direction: column;
    align-items: center;
    padding: 6px 0;
    background: linear-gradient(to right, #e8e8ec, #f6f6f6);
}

.track {
    flex: 1;
    width: 15px;
    padding: 5px 0 10px;
}

.thumb {
    display: flex;
    flex-direction: column;
    align-items: center;
    justify-content: center;
    gap: 1px;
    height: 43%;
    border: 1px solid #5d709c;
    border-radius: 2px;
    background: linear-gradient(to right, #f5f7fa, #e1e6ee 50%, #b9c8dc);
}

.thumb i {
    width: 8px;
    height: 1px;
    background: #7d8694;
}

.below-form {
    flex: none;
    height: 17px;
    background: #f6f6f6;
}

/* Status bar */
.status {
    flex: none;
    height: 22px;
    display: flex;
    align-items: center;
    border-top: 1px solid #567db1;
    background: linear-gradient(#fff 1px, #d9e8fb 1px, #c7ddf8 7px, #b2cff6 8px, #d6e5f8);
}

.status .mode {
    flex: 0 0 50%;
    padding-left: 8px;
}

.status .locks {
    flex: 1;
    height: 20px;
    line-height: 18px;
    padding-right: 9px;
    text-align: right;
    border-left: 1px solid #8fb0dc;
    border-right: 1px solid #8fb0dc;
}

.views {
    display: flex;
    margin-left: 5px;
    border: 1px solid #6f94c7;
    border-radius: 2px;
}

.views button {
    display: flex;
    align-items: center;
    justify-content: center;
    width: 19px;
    height: 18px;
}

.views .on {
    background: linear-gradient(#fde9bd, #fbc15c);
}

/* Taskbar */
.taskbar {
    flex: none;
    height: 30px;
    display: flex;
    align-items: center;
    color: #fff;
    background: linear-gradient(#4a92f0, #2663dc 5px, #2259d6 24px, #1a44ad);
}

.start {
    display: flex;
    align-items: center;
    gap: 4px;
    width: 96px;
    height: 30px;
    padding-left: 9px;
    border-radius: 0 10px 12px 0;
    font-size: 18px;
    font-weight: bold;
    font-style: italic;
    text-shadow: 1px 1px 1px #1d4a1b;
    background: linear-gradient(#5fb45c, #3b9238 5px, #37903a 22px, #2b7a2c);
    box-shadow: inset -3px 0 4px #256b27;
}

.quick-launch {
    display: flex;
    gap: 6px;
    width: 86px;
    padding-left: 12px;
}

.quick-launch button {
    display: flex;
}

.tasks {
    flex: 1;
    display: flex;
    gap: 2px;
}

.tasks button {
    display: flex;
    align-items: center;
    gap: 4px;
    flex: 0 1 158px;
    height: 25px;
    padding-left: 9px;
    border-radius: 2px;
    background: linear-gradient(#5a9bfb, #3c81f3 4px, #3a7ff0 20px, #2c66d6);
}

.tasks .pressed {
    background: #1b4db5;
    box-shadow: inset 1px 1px 2px #0f2f78;
}

.lang {
    display: flex;
    align-items: center;
    gap: 12px;
    padding-right: 14px;
}

.tray {
    display: flex;
    align-items: center;
    gap: 2px;
    height: 30px;
    padding-right: 12px;
    border-left: 1px solid #0b3f9e;
    background: linear-gradient(#35b1f5, #149bf0 5px, #1190e6 24px, #0d6fc4);
}

.chevron {
    display: flex;
    margin: 0 3px 0 -9px;
}

.tray time {
    margin-left: 9px;
}
```
